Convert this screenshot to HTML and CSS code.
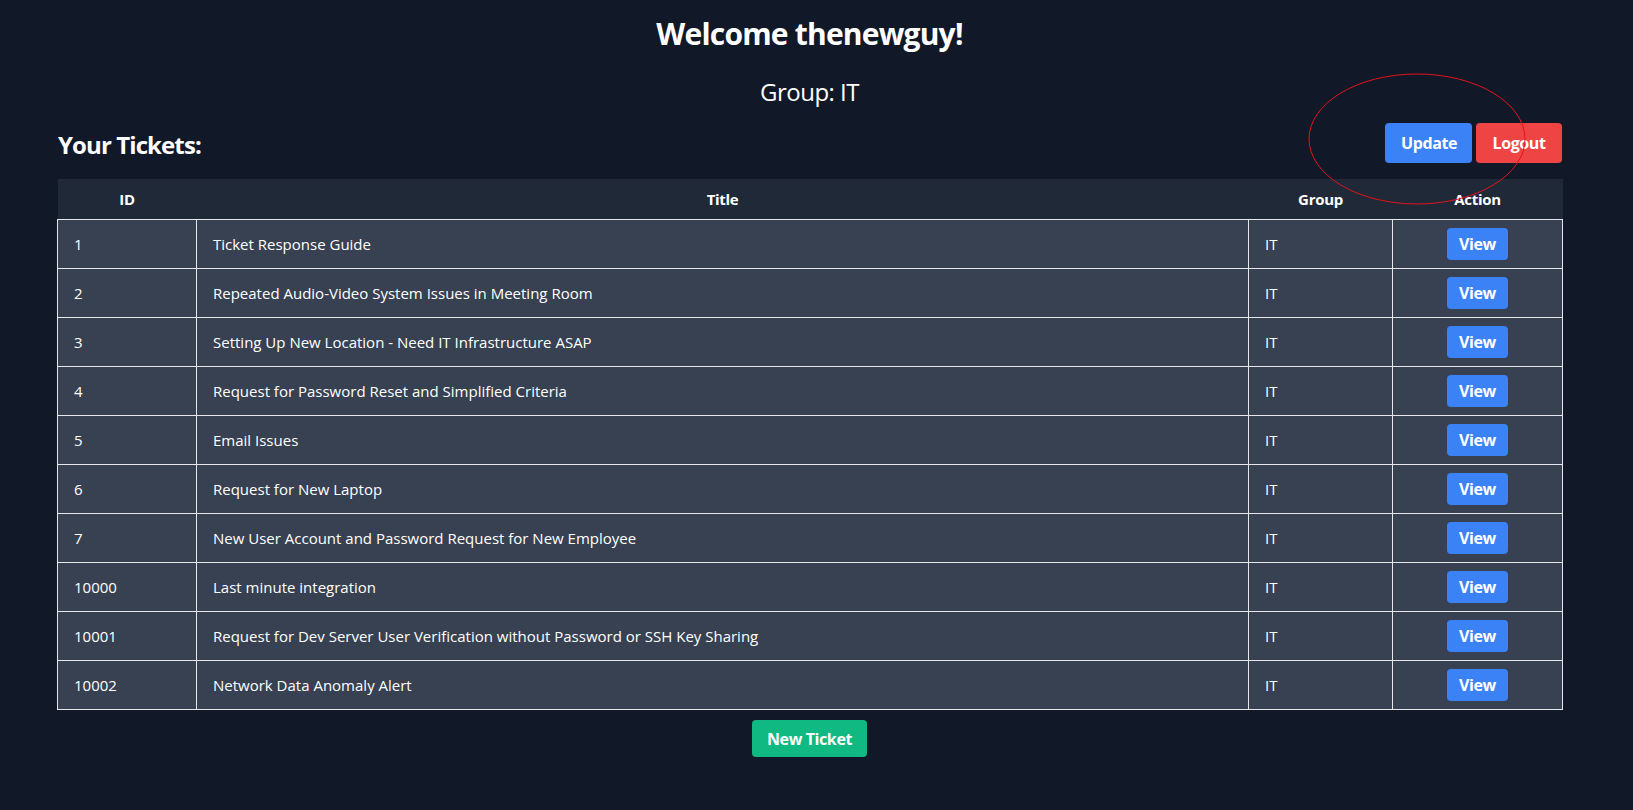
FILE: index.html
```html
<!DOCTYPE html>
<html lang="en">
<head>
<meta charset="utf-8">
<title>Tickets</title>
<link rel="stylesheet" href="styles.css">
</head>
<body>
<div class="page">
  <h1 class="welcome">Welcome thenewguy!</h1>
  <p class="group">Group: IT</p>
  <div class="container">
    <div class="toolbar">
      <h2 class="tickets-title">Your Tickets:</h2>
      <div class="actions">
        <button class="btn btn-blue">Update</button>
        <button class="btn btn-red">Logout</button>
      </div>
    </div>
    <table class="tickets">
      <colgroup>
        <col class="c-id"><col class="c-title"><col class="c-group"><col class="c-action">
      </colgroup>
      <thead>
        <tr><th>ID</th><th>Title</th><th>Group</th><th>Action</th></tr>
      </thead>
      <tbody>
        <tr><td>1</td><td>Ticket Response Guide</td><td>IT</td><td class="act"><button class="view">View</button></td></tr>
        <tr><td>2</td><td>Repeated Audio-Video System Issues in Meeting Room</td><td>IT</td><td class="act"><button class="view">View</button></td></tr>
        <tr><td>3</td><td>Setting Up New Location - Need IT Infrastructure ASAP</td><td>IT</td><td class="act"><button class="view">View</button></td></tr>
        <tr><td>4</td><td>Request for Password Reset and Simplified Criteria</td><td>IT</td><td class="act"><button class="view">View</button></td></tr>
        <tr><td>5</td><td>Email Issues</td><td>IT</td><td class="act"><button class="view">View</button></td></tr>
        <tr><td>6</td><td>Request for New Laptop</td><td>IT</td><td class="act"><button class="view">View</button></td></tr>
        <tr><td>7</td><td>New User Account and Password Request for New Employee</td><td>IT</td><td class="act"><button class="view">View</button></td></tr>
        <tr><td>10000</td><td>Last minute integration</td><td>IT</td><td class="act"><button class="view">View</button></td></tr>
        <tr><td>10001</td><td>Request for Dev Server User Verification without Password or SSH Key Sharing</td><td>IT</td><td class="act"><button class="view">View</button></td></tr>
        <tr><td>10002</td><td>Network Data Anomaly Alert</td><td>IT</td><td class="act"><button class="view">View</button></td></tr>
      </tbody>
    </table>
    <div class="footer">
      <button class="btn btn-green">New Ticket</button>
    </div>
  </div>
  <svg class="annotation" width="218" height="132" viewBox="0 0 218 132">
    <ellipse cx="109" cy="66" rx="108" ry="65" fill="none" stroke="#e3131b" stroke-width="1"/>
  </svg>
</div>
</body>
</html>
```

FILE: styles.css
```css
* { box-sizing: border-box; }

html, body {
  margin: 0;
  padding: 0;
  background: #111827;
}

body {
  font-family: "Open Sans", "Noto Sans", sans-serif;
  color: #ffffff;
  height: 810px;
  overflow: hidden;
}

.page {
  position: relative;
  width: 1619px;
  padding-top: 16px;
}

.welcome {
  margin: 0;
  text-align: center;
  font-size: 30px;
  line-height: 36px;
  font-weight: 700;
  letter-spacing: -0.8px;
}

.group {
  margin: 24px 0 0;
  text-align: center;
  font-size: 24px;
  line-height: 32px;
  font-weight: 400;
  letter-spacing: -0.5px;
}

.container {
  padding: 0 57px;
}

.toolbar {
  display: flex;
  align-items: center;
  justify-content: space-between;
  margin-top: 15px;
  height: 40px;
}

.tickets-title {
  margin: 4px 0 0 1px;
  font-size: 24px;
  line-height: 32px;
  font-weight: 700;
  letter-spacing: -0.9px;
}

.actions {
  display: flex;
  gap: 4px;
}

.btn {
  font-family: inherit;
  font-size: 16px;
  line-height: 24px;
  font-weight: 700;
  color: #ffffff;
  border: 0;
  border-radius: 4px;
  padding: 8px 16px;
  letter-spacing: -0.4px;
}

.btn-blue { background: #3b82f6; width: 87px; }
.btn-red { background: #ef4444; width: 86px; }
.btn-green { background: #10b981; width: 115px; height: 37px; padding: 6px 0; }

.tickets {
  width: 1505px;
  margin-top: 16px;
  border-collapse: collapse;
  table-layout: fixed;
}

.c-id { width: 139px; }
.c-title { width: 1052px; }
.c-group { width: 144px; }
.c-action { width: 170px; }

.tickets thead tr {
  background: #1f2937;
}

.tickets th {
  padding: 8px 16px;
  font-size: 15px;
  line-height: 24px;
  font-weight: 700;
  text-align: center;
  letter-spacing: -0.3px;
}

.tickets tbody tr {
  background: #374151;
}

.tickets td {
  border: 1px solid #e5e7eb;
  padding: 8px 16px;
  height: 49px;
  font-size: 15px;
  line-height: 24px;
  vertical-align: middle;
}

.tickets td.act {
  text-align: center;
}

.view {
  font-family: inherit;
  background: #3b82f6;
  color: #ffffff;
  border: 0;
  border-radius: 4px;
  width: 61px;
  height: 32px;
  padding: 0;
  font-size: 16px;
  font-weight: 700;
  line-height: 32px;
  letter-spacing: -0.4px;
  vertical-align: middle;
}

.footer {
  display: flex;
  justify-content: center;
  margin-top: 10px;
}

.annotation {
  position: absolute;
  left: 1308px;
  top: 73px;
}
```
